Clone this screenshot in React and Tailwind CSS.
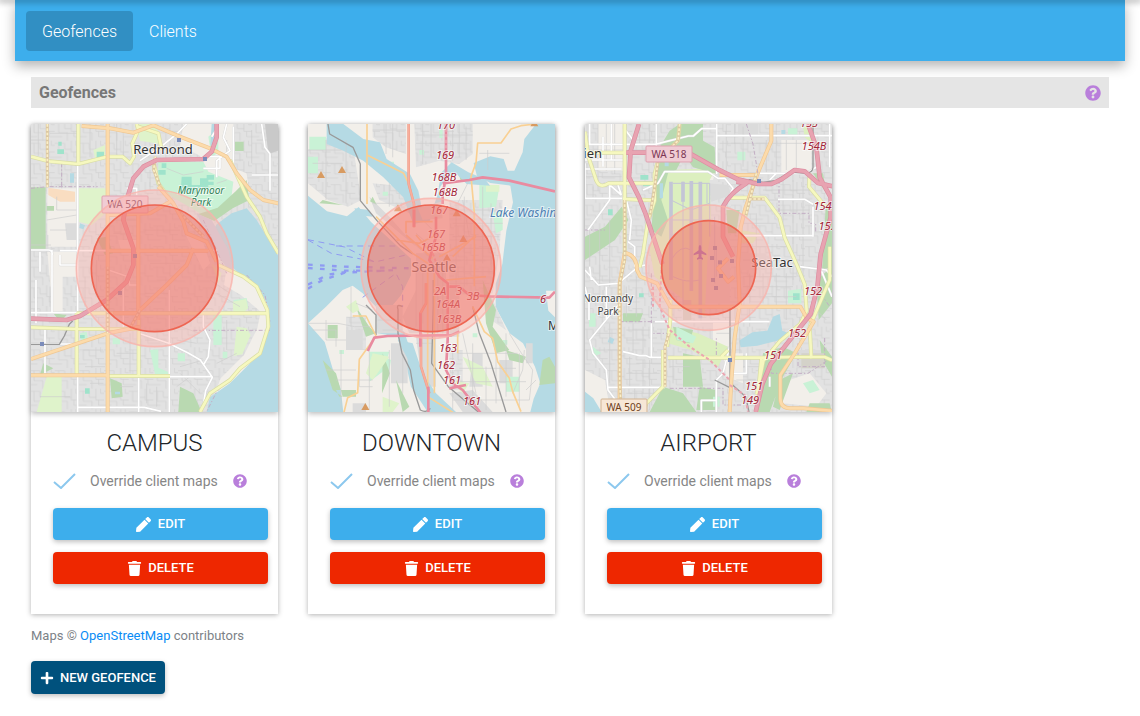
// src/pages/geofences/Geofences.jsx

import React from 'react'
import { FaPen, FaPlus, FaQuestionCircle, FaTrash } from 'react-icons/fa'

// stroke styles for the map lines: [casing colour, casing width, colour, width, dash]
const LINES = {
  minor: [null, 0, '#cdcdcd', 2],
  white: ['#d6d6d6', 7, '#ffffff', 5],
  yellow: ['#d9dda6', 12, '#f6f8bf', 8],
  orange: ['#efc793', 12, '#fcdbab', 8],
  thin: [null, 0, '#f9d093', 5],
  pink: ['#dc8da0', 14, '#e8a3b1', 10],
  hot: [null, 0, '#e98ba0', 8],
  salmon: ['#f09c88', 8, '#f8ae9c', 5],
  rail: [null, 0, '#999999', 4],
  bound: [null, 0, '#c3aec4', 3, '12 6 4 6'],
  dots: ['#dcc7a0', 9, '#fbefc6', 5, '8 5'],
  tunnel: [null, 0, '#eba5b1', 6, '10 7'],
  ferry: [null, 0, '#8f9bf2', 3, '18 14'],
  ferries: [null, 0, '#8f9bf2', 7, '14 22'],
  runway: [null, 0, '#c3c5d6', 11],
  taxi: [null, 0, '#c3c5d6', 3],
}

const GREEN = '#b9d9b1'
const LIME = '#dff3cb'
const MINT = '#c9f2d6'
const TEAL = '#9fe3cb'
const WATER = '#b5dae4'
const LAND = '#f2efea'
const GRAY = '#dbdbdb'

const campus = {
  id: 'campus',
  name: 'CAMPUS',
  origin: [3, 12],
  base: 'streets',
  areas: [
    [LAND, 'M52 205h90v175h-90z M52 395h88v75h-42v105h-30z M460 12h150v170l-70-15-30-60-60-30z M570 130l80 30 8 60-70 10z M265 360h60v40h-50z M460 330l60 40 20 60-20 20z'],
    [LAND, 'M590 445l60 20 60 60 12 80-30 90-90 110-60 50 30-80 70-70 40-80 10-50-60-50-50-30z'],
    [GRAY, 'M105 310h35v50h-30z M30 345h25v40h-25z'],
    ['#c9c9c9', 'M705 12h40v80l-30 10z'],
    [LIME, 'M140 205h85l20 60-60 50-40-10z M50 770h45v106h-75z M320 12h60l10 60-60-10z M545 430l30 30-10 30z'],
    ['#f9ddc1', 'M55 203l80 12v30h-45l-35-20z'],
    [MINT, 'M385 125h135l15 30 75 30-10 80-45 35-45-20-85-50-40-40z M535 50l30-25v70l-20 20z M550 580h25v95h-25z M610 540l40-6 5 30-36 14z'],
    [GREEN, 'M3 202h44v188h-44z M50 258h22v14h-22z M200 355l30-5 20 50-25 5z M615 65h26v28h-26z M650 180l8 60-50 25-55 38-50-20 60-20 55-50z M450 800l40 20 25 56h-70z M240 775l35 15 3 40-33 5z M40 730l30 15-40 20z M70 580l40 5-20 20z'],
    [LIME, 'M190 90l35-15v40h-30z M620 620l30 5 12 20-25 58-26 5z M608 545l40-8 6 28-20 20-24-10z'],
    [MINT, 'M360 690l25-2v55l35 15v12l-45-8z M150 640l20-5 4 25-20 6z M578 695h14v20h-14z M443 700h22v24h-22z M248 655h22v18h-22z'],
    [TEAL, 'M455 170h30v25h25v-20h25v30h-35l-5 15h-22l-20-20z M395 130h14v14h-14z M385 150h22v14h-22z M530 165h22v14h-22z M535 185h16v10h-16z M85 65h10v12h-10z M82 88h20v14h-20z M200 95h22v18h-22z M165 805h14v16h-14z M150 645h14v10h-14z'],
    [WATER, 'M120 160h12v28h-12z M150 310l15 6-5 12-12-4z M545 12h12l-6 60-10 5z M255 815h15v8h-15z'],
    [WATER, 'M545 338l15-25 45-33 45-15 30 35 65 108v468H530l10-44 60-42 40-40 50-50 28-80-3-60-25-50-50-40-30-25-40-65z'],
    ['#cfcfdc', 'M500 280l45 20 50 90 14 60-20-8-50-70z'],
  ],
  lines: [
    ['minor', 'M95 135v70 M3 375h60 M260 12v100 M280 50v60 M180 12v100 M25 12v95 M3 60h50 M60 40h80 M80 230v40h60 M50 300l90-15 M60 330h50 M360 150v60 M410 145l50 20 60-10 M590 60v60h50 M560 190l30-10 M665 30v100 M680 60h30 M250 300h70 M250 340h60 M340 330h110 M360 430h90 M380 480h60 M345 520h70 M540 480l60 40 M560 520l70 40 M200 420v100 M165 470v90 M20 510v60 M60 500v60 M160 690h60 M165 740h60 M300 640v120 M345 660h60 M260 700h60 M450 620l60 20 M440 660l60 10 M450 740l70-20 M450 760l60 60 M440 800l40-30 M270 800h40 M180 790h40 M30 830h90 M350 790v60 M380 800v60 M590 600v90 M560 730l60-30'],
    ['bound', 'M3 205l50-5h150 M95 130v70 M490 631h230 M520 300l40 90 30 70 M650 465l55 60 15 80-30 90-60 50-70 70-30 60 M560 12v60'],
    ['white', 'M143 132v744 M66 390v185 M3 390h52q12 0 12 15 M18 480v130 M3 578h140 M90 392h470 M418 510v366 M326 770v106 M45 630v130 M3 672h140 M326 640l90 30 60 30 35 20 36 52-20 40-10 60 M420 770h125 M520 580v40l20 40-5 50-15 25 M143 862h200l50 12 M470 12l-30 30-50 40-60 40 M590 12l-10 40 20 40-40 30v50 M695 12l10 70 15 20v110 M665 165h80 M520 110h50v35h-50 M610 20v130 M290 205h30v20 M235 450l60 20 4 25h22 M280 490v130 M30 395v60 M90 405v30h50 M545 50l20-30'],
    ['rail', 'M3 673h85l15-25 15-35 10-10'],
    ['yellow', 'M3 110l55 14 87 8 88-22h45l22 20 12-20-5-40 18-40-5-18 M145 12v120 M140 580h572 M3 622l137 5h190 M140 580v186 M326 600v170 M233 768h187 M325 20l60 20 10 50 M370 125l15 65 45 60 M600 120l50 110 40 60 20 50 35 60 M510 876l30-56 60-40 30-35 60-45 25-80-3-50-32-70-40-30-75-35'],
    ['dots', 'M52 12v190 M376 110l-5 40 20 50 50 70 80 80'],
    ['orange', 'M233 12v864 M3 766h230 M3 717l230-77 97-20 M155 18l85 7 70 13 60-22 80 34 90 35 50 25 30 50 40 50 40 30 45 10 M250 580h75 M325 280v320 M235 285l125-5 60-35 M330 570l80-75 60-60 20-50 M385 200l45 50 30 55 10 35 60 25 30 60 M235 392h300'],
    ['pink', 'M560 12v40l-15 43-25 22-140 3-40 20-30 35-20 65-10 60 30 85v50l-20 50-60 55-80 48-40 12-107-4'],
    ['dots', 'M233 440v200 M330 570l-30 55'],
  ],
  dots: [[447, 60], [525, 117], [36, 672], [270, 519], [315, 408]],
  labels: [
    ['Redmond', 132, 30, 'town'],
    ['Marymoor', 170, 70, 'park'],
    ['Park', 170, 82, 'park'],
  ],
  shields: [['WA 520', 71, 72, 46, 17, '#f0ccd4', '#dfa1b0', '#8b4860']],
  ring: [374, 445, 235, 190],
}

const downtown = {
  id: 'downtown',
  name: 'DOWNTOWN',
  origin: [6, 12],
  base: WATER,
  areas: [
    [LAND, 'M6 12h684l-35 45-5 40-25 55h-20l-12-35-40-8-50 20 10 40 40 20 60 8 8 50-20 85-12 100-20 60v70l42 78 40 30 36 70 16 50-20 46-10 40H440l-60-60-55-90-30-90-30-20-5-60 25-30 30-60v-50l-120-110-37-45-35 28-60-15-67-55z'],
    [LAND, 'M6 610l54-50 50-50 30-13 30 23 40 40 5 80 60 10 20 60 20 90 50 76H112l-8-70-24-60-24-80z M720 512h27v80l-20-20z'],
    ['url(#streets-downtown)', 'M6 90l80-50 60 70 20 130-40 20-60-20-60-50z M200 12h100v90l-60-20-40-30z M325 12h175v90l-40 30-60-10-70 20z M430 240h160l-10 160-20 120-130 5z M200 190l100 10 10 80-90-40z M120 590h60v100h-60z M430 690h40v120h-40z M530 470l40 90 30 70-60-40z'],
    [GRAY, 'M210 555h80v85h-75z M330 400h90v240h-110l-20-50 40-80z M255 670h50v120h-50z M330 650h60v150h-40z M500 700h30v100h-40z M120 630h50v60h-50z M580 720h40v70h-40z M430 500h30v150h-30z M430 820l70-10 60 66h-90z M190 230l60 60 80 90-120-100z M660 670h20v60h-20z M140 850h40v26h-40z'],
    [MINT, 'M10 50h50v40h-50z M6 110h30v50h-30z M520 190l60 10-10 60-50 5z M190 695h60l-20 60-40 30z M600 770h40v45h-40z M215 700l40 20-10 60z M560 280l30-10v60l-20 10z M250 125h14v16h-14z M230 215h16v12h-16z M340 90h14v14h-14z M400 30h10v24h-10z M500 640h14v12h-14z M590 660h14v14h-14z M100 690h14v12h-14z'],
    [GREEN, 'M70 20l30 30-30 10z M50 240l60 15-70-5z M150 560l40 60 20 20-30 10z M65 615h30v40h-30z M50 720l30 90 30 20-20-70z M530 480l40 90-10 50 50 70-40 10-30-90z M600 690l60 20-10 20-40-10z M710 720l20-10 17 30v50l-47 5z M90 810h60v20h-50z M270 780l40 80-20 16z M200 230l12 24-20-10z M455 150l40 30-30 5z M230 700l22 60-24 60z'],
    [LIME, 'M200 700l50 10-50 70-20-20z M470 710l60 30 30 60-50-10z M540 195h40v20h-40z M230 830l50 20-20 26h-30z M430 780l60 10-20 30z M120 560l30-20 10 30-20 10z'],
    [WATER, 'M62 12h50l60 45 50 10 20 50 70 45 25 50 10 50 40 25 20-40-10-40 10-50 30-30 50 30 50 20 15 20-70-5-30-30-30 10-20 30-20 60-10 40-50 10-30-80-60-60-60-50-60-30-50-20z'],
    [WATER, 'M275 660l45 10 30 90 40 60 60 56h-50l-50-60-35-80z M145 265l45 5 10 20-45-5z'],
    [GRAY, 'M335 265l70-20 5 50-60 5z'],
  ],
  lines: [
    ['minor', 'M6 90h100 M20 130h90 M60 60v180 M120 60v190 M200 30h100 M240 12v90 M260 12v100 M330 45h170 M330 70h160 M350 12v120 M375 12v100 M440 12v110 M460 12v100 M480 20v100 M520 100h90 M545 90v60 M200 250h100 M250 190v70 M430 270h160 M440 310h150 M440 350h140 M440 385h130 M440 420h120 M450 250v270 M475 230v270 M530 200v230 M555 250v200 M430 455h130 M430 490h120 M6 610h90l50 10h50 M60 600v60h60 M135 500v120 M150 550l50 20 M20 630h70v50 M105 690v180 M160 720v80h40 M60 750h90 M90 780h110 M190 680v190 M250 690v170 M290 700v120 M215 600h70 M230 630h60 M330 670h50 M440 670v200 M455 700h180 M460 745h170 M450 785h210 M440 840h230 M500 670v170 M540 740v130 M570 690v160 M600 640v190 M640 700v160 M655 690l-5 60-30 70 M690 780l-30 30 M610 640l30 50 40 60-10 90 M350 300l60 60 M330 340l80 70 M300 350l80 70 M330 440v180 M350 450v160 M395 440v200 M410 440v200'],
    ['rail', 'M66 12l5 30 70 40 22 50v110l50 60 70 75 37 25 M290 560q-20-10-14 8v72l12 60 25 50 10 60 20 60q20 10 30-5 M180 555l30 30v60 M382 480v80l-5 170 50 70 90 76 M500 560l20 80 35 90 45 146'],
    ['minor', 'M470 240l20 110 M495 170l-40 80 M470 640l40 180'],
    ['ferry', 'M6 359l110 22 90 45 90-20 M6 360l70 40 130 25 M90 378h190 M170 532l100-72 20 40v60'],
    ['ferries', 'M6 434l110 6 200 5 M6 444l110 8h140 M6 506l40-24 70-24 150-8 M6 494l60-30 80-12'],
    ['thin', 'M183 12v240 M183 105l50 25 60 30 20 40 M690 12l-45 5-30 10-30 42h-70l-5 60-15 40 10 110v220 M140 588h40l30 60-50 70-5 100-30 15-15 60 M500 560l35 75 25 20 15 70 35 50 10 40 25 60 M365 440v390l80 50 M385 460v360 M300 340v-35h80 M270 360l70 10 50-25 M440 410l70-65 M210 290l110 110 60 40 M300 345l80 70 M330 345l50 60 M400 410l110-60 M420 480l120-10 M455 640v60'],
    ['salmon', 'M308 12v180l16 60v70 M345 640v100l25 80 M360 490v60l-17 30v60'],
    ['hot', 'M420 12v160l-10 50v30 M410 190l80-10 40-8 80 10 137 32 M324 270v50 M390 290v60l-20 70 30 50 25 20v170l-5 90 20 40 30 20 65 83 M185 693l20-40 40-5 150-2h40l25-12 M430 500h30l30 25 60 4 180 4 17-18 M367 800v76 M430 805l50-10 M343 580v100'],
    ['tunnel', 'M380 400l15 40 M420 25v60'],
  ],
  peaks: [[45, 165], [108, 150], [276, 265], [452, 280], [472, 357], [423, 413], [178, 861], [685, 10]],
  labels: [
    ['170', 138, 5, 'exit'],
    ['169', 137, 35, 'exit'],
    ['168B', 136, 57, 'exit'],
    ['168B', 137, 72, 'exit'],
    ['167', 131, 90, 'exit'],
    ['167', 128, 114, 'exit'],
    ['165B', 125, 127, 'exit'],
    ['2A', 132, 171, 'exit'],
    ['3', 151, 171, 'exit'],
    ['3B', 165, 176, 'exit'],
    ['164A', 140, 184, 'exit'],
    ['163B', 141, 199, 'exit'],
    ['163', 140, 228, 'exit'],
    ['162', 138, 245, 'exit'],
    ['161', 144, 260, 'exit'],
    ['161', 164, 281, 'exit'],
    ['6', 235, 179, 'exit'],
    ['Seattle', 126, 148, 'city'],
    ['Lake Washington', 182, 93, 'lake'],
    ['Mercer', 240, 206, 'edge'],
  ],
  ring: [375, 445, 210, 190],
}

const airport = {
  id: 'airport',
  name: 'AIRPORT',
  origin: [6, 12],
  base: 'streets',
  areas: [
    [LAND, 'M45 12h75v140h-75z M6 750l60 30 10 60-20 36h-50z M595 60h90v100h-90z M250 150h150l-10 30h-120z M390 600h50v80h-50z M420 700h60v90l-50-20z M590 790l90-30 50 60-30 40-100-10z'],
    [GRAY, 'M375 190l60 5 10 30-60 20z M465 12h60v30h-60z M365 320h75v230h-75z M640 690h80v55h-80z M470 400h80v50h-80z'],
    ['#dcefbf', 'M250 150l150-5-20 35 5 150-10 60-10 200-50-40-100-80-15-80z M255 620l90 20 90 40-30 60-80-50-70-20z M660 20l30-8v60l-25-20z M470 330l60 10-20 30h-40z'],
    [GREEN, 'M290 12h70v50l35 20 5 80-70-20-40-60h-60l30-50z M230 100l70 10-20 40-25 10-20 80 20 60-20 50-30-20 10-130z M6 350l60-30 50-60 20 40-40 60-90 60z M270 620l60 10-10 40-40-10z M300 700l50 10 10 90h-60z M240 800l60 20 40 56h-140z M690 160l40 60-10-60z M540 700l60-20 40 20-40 70-40 106h-40l10-90z M700 480l47-40v110l-40 50z M710 660l37 50v60l-30-50z M590 780l40-20-40 110-20-10z M350 800l50 10v60h-60z M120 580h60l-10 25h-50z M740 850h-60l-10 26h76z M430 270h40l-10 70h-25z M728 260h19v180l-30 10z'],
    [MINT, 'M18 580h20v40h-20z M463 95h24v26h-24z M615 25h28v24h-28z M30 680l25 20-25 10z M615 512l40-6v44h-40z M390 830h20v30h-20z M280 620l60 30-10 20-50-10z M660 790l30-10 20 30-30 10z'],
    [TEAL, 'M172 165h24v14h-24z M180 185h22v14h-22z M630 520h20v20h-20z M75 268h14v18h-14z M205 100h10v14h-10z M168 520h14v12h-14z'],
    ['#d4d2c9', 'M655 700h70v45h-70z M300 540h25v60h-25z'],
    [WATER, 'M6 815l25 20 25 41h-50z M570 590l20-8 8 50 25 10-40 20-60 15-50 5-5-20 40-25 45-5z M80 650l14 8-6 14-14-6z M230 190h10v45h-10z M595 30h12v12h-12z M245 125h12v14h-12z'],
  ],
  lines: [
    ['minor', 'M20 12v60 M45 12v200 M70 12v140 M95 12v150 M140 60h80 M150 90h60 M170 12v60 M200 12v90 M6 90h120 M6 170h110 M30 200v40 M410 70h330 M430 12v140 M455 12v60 M480 20v120 M550 60v100 M580 12v150 M610 60v90 M640 60v100 M540 210h150 M550 240h130 M560 270h120 M600 180v170 M630 180v300 M660 170v300 M470 310h110 M470 380h140 M480 420h170 M520 280v170 M480 470h160 M480 500h150 M480 530h160 M500 460v90 M540 460v90 M580 460v100 M610 460v140 M20 320v120 M50 330v170 M80 300v200 M140 330h50 M140 360h40 M140 480h50 M20 480h80 M30 530h70 M60 510v80 M130 500v90 M160 470v120 M130 630h70 M30 640h70 M130 660h60 M150 610v90 M180 620v80 M40 690h70 M80 610v180 M140 710v90 M180 720v100 M160 730h80 M130 760h100 M130 820h100 M155 800v60 M200 720v150 M270 720v70 M260 740h60 M400 640h40 M470 620v80 M480 740h60 M500 560v60 M460 780h60 M690 560l40 40 M600 350h60'],
    ['bound', 'M588 180v100h90v30h20v30 M6 330h60 M110 605h170 M205 460v180h60 M400 705v-50 M260 805h160v50h60 M565 700v60h110l60 -40 M700 500l40 60 M645 670v70h80v-90'],
    ['runway', 'M264 185v295 M325 183v330 M352 185v410 M300 185v60'],
    ['taxi', 'M270 190h110 M300 185v290 M380 190v160 M372 190v60 M264 240l60 30 55-20 M264 300h120 M264 420q30-50 60-30 M270 470q40 20 80 10 M395 290v200 M264 350l40-30 M300 480v90 M400 380v90'],
    ['white', 'M6 73h210l100-25 15 0 25-22h45 M220 12v90 M401 12v150 M401 47h346 M6 147h110 M6 130v105h112 M6 120h120 M60 50v90 M85 12v110 M120 20l30 40 M80 190v50l-65 90 M75 190l40 35 M105 195l10 30 M20 12v60 M225 190l20-35h130l30 20 20 0 25 30-20 40 M530 160h140l40 -25 M560 180l20-20 M585 238h80l25 15 M480 347h210 M740 12v130 M6 450l40 45 60-5 60-50 20-5 M6 500l12 50v50 M20 440l5 40 M110 490v60l-90 110 10 40 40 50 5 60 30 40 25 25 M205 610v100 M120 695l50 12 20 0 10 5h40 M75 802h170 M215 605h345 M70 500v100 M440 680l-20 80-20 20v96 M355 876v-35h45 M490 700v60h-40 M560 800v-30 M135 365l20 15v60 M650 440l80 10 17 20 M225 190l-45 20 M130 240l15 60-5 60 M690 350v-90 M710 440l37 90'],
    ['rail', 'M690 12v130q0 15-20 18l-50-4-40 25-40 6-40-8q-40 20-60 50 M441 560v310 M443 790l45 40 10 46 M395 780l50 25'],
    ['yellow', 'M6 35l10 75 20 60q10 40 40 20h140 M6 98h130 M120 237l90 4 M125 12v390 M290 12l-5 50-60 60-10 40v80l-20 60-15 100-10 40 M255 713h290l80-2h100l22 10 M240 690v110l-50 50-10 26 M680 160l-2 40 50 60 M435 233h110l45 60 15 60 40 90 20 50 6 80-20 40-60 50-50 60-20 100 M740 380v100l-60 140 5 95 M435 690l-20 20 M262 540v60l-10 80 M520 876l15-160'],
    ['orange', 'M410 165h112 M565 12v50l-42 100-35 100-15 60-8 110 5 120-15 100-10 130-5 94 M122 400h10q30 10 30 50l10 20 50 20 40 70h390l20 35 20 10-60 100-40 60v70q0 30 30 30h40l90 8 M110 870v-380l15-90 M435 415l-30 30 30 40 18-15'],
    ['dots', 'M125 240v180l-15 70v300l5 80 M290 12l-5 50-60 60-10 80-15 90 M258 640l-12 40v120 M520 160l-32 130 M545 237h-50'],
    ['tunnel', 'M235 450l-5 110 30 70 60 50 60 40 60 60 M210 500v60'],
    ['bound', 'M490 12l20 60 15 90'],
    ['pink', 'M168 12l-25 80-5 80 30 60 20 50 50 150 M130 98h60l135 5 80 45 60 30 60 14h40l30-14 40-28 30 4 40 35 45 10 M460 185l30 5q-50 30-70 70v90l30 60 M675 12l25 70 10 90 33 60v60l-30 110-10 100-20 80-80 100-40 50-25 60-20 84'],
    ['tunnel', 'M440 795l45 30 10 50'],
  ],
  dots: [[528, 183], [441, 720], [396, 384], [387, 414], [411, 427], [447, 423], [414, 468], [390, 480], [399, 504]],
  plane: true,
  labels: [
    ['Burien', 17, 34, 'townEnd'],
    ['SeaTac', 187, 143, 'town'],
    ['Normandy', 23, 178, 'small'],
    ['Park', 23, 191, 'small'],
    ['153', 224, 3, 'exit'],
    ['154B', 229, 26, 'exit'],
    ['154.', 239, 86, 'exit'],
    ['15.', 241, 106, 'exit'],
    ['152', 228, 171, 'exit'],
    ['152', 212, 213, 'exit'],
    ['151', 188, 235, 'exit'],
    ['151', 169, 266, 'exit'],
    ['149', 165, 280, 'exit'],
  ],
  shields: [
    ['WA 518', 61, 22, 46, 16, '#f0ccd4', '#dfa1b0', '#7c3653'],
    ['WA 509', 16, 275, 46, 17, '#f7e7d6', '#d2b493', '#6e3e1c'],
  ],
  ring: [377, 443, 188, 141],
}

const geofences = [campus, downtown, airport]

const LABELS = {
  town: 'fill-[#333] text-[13px] [text-anchor:middle]',
  townEnd: 'fill-[#333] text-[13px] [text-anchor:end]',
  city: 'fill-[#4f4a4a] text-[14px] [text-anchor:middle]',
  edge: 'fill-[#333] text-[12px]',
  small: 'fill-[#444] text-[10px] [text-anchor:middle]',
  park: 'fill-[#2f8055] text-[10px] italic [text-anchor:middle]',
  lake: 'fill-[#4d80b3] text-[12px] italic',
  exit: 'fill-[#a32638] text-[11px] italic [text-anchor:middle]',
}

const Line = ({ kind, d }) => {
  const [casing, casingWidth, color, width, dash] = LINES[kind]
  return (
    <g fill="none" strokeLinejoin="round">
      {casing && <path d={d} stroke={casing} strokeWidth={casingWidth} />}
      <path d={d} stroke={color} strokeWidth={width} strokeDasharray={dash} />
    </g>
  )
}

const FenceMap = ({ fence }) => {
  const { id, origin, base, areas, lines, dots = [], peaks = [], labels, shields = [], ring } = fence
  const [cx, cy, outer, inner] = ring
  // the geometry is kept at three units to the pixel
  const toMap = `scale(${1 / 3}) translate(${-origin[0]} ${-origin[1]})`

  return (
    <svg
      viewBox="0 0 247 288"
      className="block w-full shadow-[0_2px_5px_rgba(0,0,0,0.25)]"
      role="img"
      aria-label={`Map of ${fence.name}`}
      fontFamily='"Noto Sans", sans-serif'
    >
      <defs>
        <pattern id={`streets-${id}`} width="74" height="62" patternUnits="userSpaceOnUse">
          <rect width="74" height="62" fill="#e2e2e2" />
          <path
            d="M0 8h30v18h20M50 0v34h24M12 8v30h26v24M0 50h22M58 34v16h16M64 0v14h10"
            fill="none"
            stroke="#d0d0d0"
            strokeWidth="2"
          />
        </pattern>
      </defs>
      <g transform={toMap}>
        <rect x="0" y="0" width="760" height="890" fill={base === 'streets' ? `url(#streets-${id})` : base} />
        {areas.map(([fill, d], idx) => (
          <path key={idx} d={d} fill={fill} />
        ))}
        {lines.map(([kind, d], idx) => (
          <Line key={idx} kind={kind} d={d} />
        ))}
        {dots.map(([x, y]) => (
          <rect key={`${x}-${y}`} x={x - 6} y={y - 6} width="12" height="12" fill="#7b8cbb" />
        ))}
        {peaks.map(([x, y]) => (
          <path key={`${x}-${y}`} d={`M${x} ${y - 12}l12 21h-24z`} fill="#d89b61" />
        ))}
        {fence.plane && (
          <path
            d="M351 375q4 0 4 8v8l15 10v5l-15-5v10l5 4v4l-9-3-9 3v-4l5-4v-10l-15 5v-5l15-10v-8q0-8 4-8z"
            fill="#8461c4"
          />
        )}
      </g>
      {shields.map(([text, x, y, w, h, fill, stroke, color]) => (
        <g key={text}>
          <rect x={x} y={y} width={w} height={h} rx="1" fill={fill} stroke={stroke} />
          <text x={x + w / 2} y={y + 12} fill={color} className="text-[10px] [text-anchor:middle]">
            {text}
          </text>
        </g>
      ))}
      {labels.map(([text, x, y, kind], idx) => (
        <text
          key={idx}
          x={x}
          y={y}
          stroke="#ffffff"
          strokeOpacity="0.6"
          strokeWidth="2"
          paintOrder="stroke"
          className={LABELS[kind]}
        >
          {text}
        </text>
      ))}
      <g transform={toMap}>
        <circle cx={cx} cy={cy} r={outer} fill="#ffb0a8" fillOpacity="0.38" stroke="#f9b3ab" strokeOpacity="0.8" strokeWidth="5" />
        <circle cx={cx} cy={cy} r={inner} fill="#ee6458" fillOpacity="0.44" stroke="#ee6552" strokeWidth="5" />
      </g>
    </svg>
  )
}

const HelpButton = ({ label, className }) => (
  <button type="button" aria-label={label} className={`text-[#b97fdb] ${className}`}>
    <FaQuestionCircle className="h-full w-full" />
  </button>
)

const ActionButton = ({ icon: Icon, className, children }) => (
  <button
    type="button"
    className={`flex items-center justify-center rounded text-[13px] font-medium text-white uppercase shadow-[0_2px_5px_rgba(0,0,0,0.25)] ${className}`}
  >
    <Icon />
    {children}
  </button>
)

const GeofenceCard = ({ fence }) => (
  <section className="w-[247px] bg-white pb-[30px] shadow-[0_1px_5px_rgba(0,0,0,0.3)]">
    <FenceMap fence={fence} />
    <h2 className="mt-[13px] text-center text-2xl leading-9 font-light text-[#212529]">{fence.name}</h2>
    <div className="mt-2 flex h-6 items-center pl-[22px]">
      <span className="relative h-4 w-[23px]">
        <input
          id={`override-${fence.id}`}
          type="checkbox"
          defaultChecked
          className="peer block h-4 w-[23px] appearance-none"
        />
        <svg
          viewBox="0 0 23 16"
          className="pointer-events-none absolute inset-0 hidden peer-checked:block"
          fill="none"
          stroke="#8cc8ee"
          strokeWidth="2"
        >
          <path d="M1 9l7 6L22 1" />
        </svg>
      </span>
      <label htmlFor={`override-${fence.id}`} className="ml-[14px] text-sm text-[#868686]">
        Override client maps
      </label>
      <HelpButton label="About overriding client maps" className="ml-[15px] h-[14px] w-[14px]" />
    </div>
    <div className="mt-[15px] flex flex-col gap-3 pr-[10px] pl-[22px]">
      <ActionButton icon={FaPen} className="h-8 gap-[7px] bg-[#3daeec] [&_svg]:size-[15px]">
        Edit
      </ActionButton>
      <ActionButton icon={FaTrash} className="h-8 gap-[6px] bg-[#ee2700] [&_svg]:size-[15px]">
        Delete
      </ActionButton>
    </div>
  </section>
)

export default function App() {
  return (
    <div className="relative min-h-screen overflow-x-hidden bg-white px-[15px] font-[Roboto,sans-serif]">
      {/* Edge shadow under the window's top bar */}
      <div className="pointer-events-none absolute inset-x-0 top-0 z-10 h-0 shadow-[0_0_6px_2px_rgba(0,0,0,0.35)]" />

      <nav className="flex items-center bg-[#3daeec] px-[11px] pt-[11px] pb-[10px] shadow-[0_5px_12px_rgba(0,0,0,0.3)]">
        <a href="#geofences" className="rounded bg-[#318fc3] px-4 pt-[9px] pb-[7px] font-light text-white">
          Geofences
        </a>
        <a href="#clients" className="px-4 pt-[9px] pb-[7px] font-light text-white">
          Clients
        </a>
      </nav>

      <main className="p-4">
        <header className="flex h-[31px] items-center justify-between bg-[#e5e5e5] px-2">
          <h1 className="font-bold text-[#777]">Geofences</h1>
          <HelpButton label="About geofences" className="h-4 w-4" />
        </header>

        <div className="mt-4 flex flex-wrap gap-[30px]">
          {geofences.map((fence) => (
            <GeofenceCard key={fence.id} fence={fence} />
          ))}
        </div>

        <p className="mt-3 text-[13px] leading-5 text-[#7c8287]">
          Maps ©{' '}
          <a href="#openstreetmap" className="text-[#0a8cf5]">
            OpenStreetMap
          </a>{' '}
          contributors
        </p>

        <ActionButton icon={FaPlus} className="mt-[15px] h-[33px] gap-[6px] bg-[#00517d] px-[9px] [&_svg]:size-[14px]">
          New Geofence
        </ActionButton>
      </main>
    </div>
  )
}
